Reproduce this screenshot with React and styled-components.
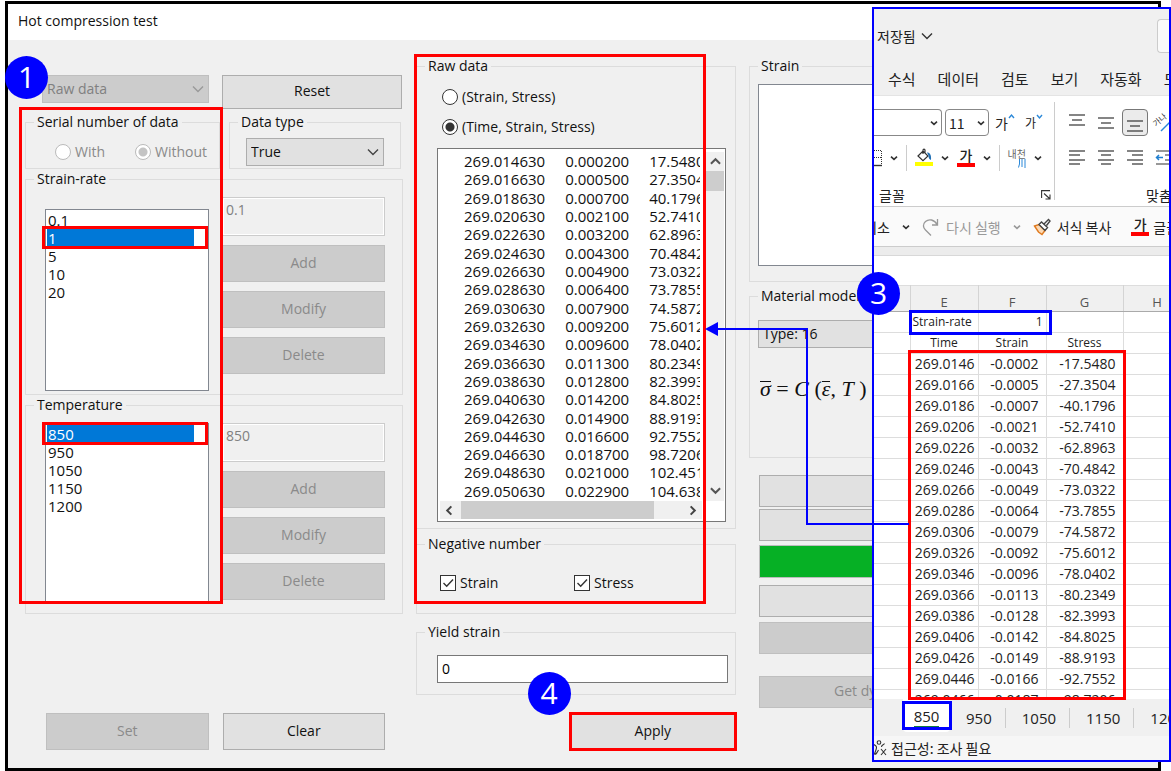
import React from 'react'
import styled, { createGlobalStyle, css } from 'styled-components'

const sans = '"Open Sans", "Noto Sans CJK KR", sans-serif'
const korean = '"Noto Sans CJK KR", sans-serif'

const strainRates = ['0.1', '1', '5', '10', '20']
const temperatures = ['850', '950', '1050', '1150', '1200']

const rawRows = [
  ['269.014630', '0.000200', '17.5480'],
  ['269.016630', '0.000500', '27.3504'],
  ['269.018630', '0.000700', '40.1796'],
  ['269.020630', '0.002100', '52.7410'],
  ['269.022630', '0.003200', '62.8963'],
  ['269.024630', '0.004300', '70.4842'],
  ['269.026630', '0.004900', '73.0322'],
  ['269.028630', '0.006400', '73.7855'],
  ['269.030630', '0.007900', '74.5872'],
  ['269.032630', '0.009200', '75.6012'],
  ['269.034630', '0.009600', '78.0402'],
  ['269.036630', '0.011300', '80.2349'],
  ['269.038630', '0.012800', '82.3993'],
  ['269.040630', '0.014200', '84.8025'],
  ['269.042630', '0.014900', '88.9193'],
  ['269.044630', '0.016600', '92.7552'],
  ['269.046630', '0.018700', '98.7206'],
  ['269.048630', '0.021000', '102.451'],
  ['269.050630', '0.022900', '104.638']
]

const sheetRows = [
  ['269.0146', '-0.0002', '-17.5480'],
  ['269.0166', '-0.0005', '-27.3504'],
  ['269.0186', '-0.0007', '-40.1796'],
  ['269.0206', '-0.0021', '-52.7410'],
  ['269.0226', '-0.0032', '-62.8963'],
  ['269.0246', '-0.0043', '-70.4842'],
  ['269.0266', '-0.0049', '-73.0322'],
  ['269.0286', '-0.0064', '-73.7855'],
  ['269.0306', '-0.0079', '-74.5872'],
  ['269.0326', '-0.0092', '-75.6012'],
  ['269.0346', '-0.0096', '-78.0402'],
  ['269.0366', '-0.0113', '-80.2349'],
  ['269.0386', '-0.0128', '-82.3993'],
  ['269.0406', '-0.0142', '-84.8025'],
  ['269.0426', '-0.0149', '-88.9193'],
  ['269.0446', '-0.0166', '-92.7552'],
  ['269.0466', '-0.0187', '-98.7206']
]

const Chevron = ({ size = 12, color = '#555', weight = 1.4, up = false }) => (
  <svg width={size} height={size} viewBox='0 0 12 12' fill='none'>
    <path d={up ? 'M1 8.5 6 3.5l5 5' : 'M1 3.5l5 5 5-5'} stroke={color} strokeWidth={weight} />
  </svg>
)

const SmallChevron = ({ color = '#333' }) => (
  <svg width='8' height='8' viewBox='0 0 8 8' fill='none'>
    <path d='M1 2.6 4 5.4 7 2.6' stroke={color} strokeWidth='1.6' />
  </svg>
)

const Lines = ({ rows }) => (
  <svg width='16' height='18' viewBox='0 0 16 18' stroke='#333' strokeWidth='1.2'>
    {rows.map(([x1, x2, y]) => (
      <path key={y} d={`M${x1} ${y}H${x2}`} />
    ))}
  </svg>
)

const DropDown = ({ label, value, disabled }) => (
  <DropDownBox $disabled={disabled}>
    <DropDownSelect aria-label={label} defaultValue={value} disabled={disabled}>
      <option>{value}</option>
    </DropDownSelect>
    <Chevron color={disabled ? '#999' : '#444'} />
  </DropDownBox>
)

const Choice = ({ type, name, label, checked, disabled }) => (
  <ChoiceLabel $disabled={disabled}>
    <Tick>
      {type === 'radio' ? (
        <Radio type='radio' name={name} defaultChecked={checked} disabled={disabled} />
      ) : (
        <Checkbox type='checkbox' defaultChecked={checked} />
      )}
      {type === 'checkbox' && (
        <svg width='16' height='16' viewBox='0 0 16 16' fill='none'>
          <path d='M3.5 8l3.2 3.2L13 4.5' stroke='#333' strokeWidth='1.4' />
        </svg>
      )}
    </Tick>
    {label}
  </ChoiceLabel>
)

const ValueEditor = ({ title, values, selected, current, low }) => (
  <Group>
    <Legend>{title}</Legend>
    <EditorGrid $low={low}>
      <ListBox role='listbox' aria-label={title} $low={low}>
        {values.map(value => (
          <ListItem key={value} role='option' aria-selected={value === selected}>
            {value}
            {value === selected && <Marker $inset='-3px -14px -2px -5px' />}
          </ListItem>
        ))}
      </ListBox>
      <EditorButtons>
        <ReadOnlyInput aria-label={`${title} value`} defaultValue={current} disabled />
        <Button disabled>Add</Button>
        <Button disabled>Modify</Button>
        <Button disabled>Delete</Button>
      </EditorButtons>
    </EditorGrid>
  </Group>
)

const InputColumn = () => (
  <Column>
    <TopRow>
      <DropDown label='Source' value='Raw data' disabled />
      <Button $height={34}>Reset</Button>
    </TopRow>
    <TypeRow>
      <Group>
        <Legend>Serial number of data</Legend>
        <SerialChoices>
          <Choice type='radio' name='serial' label='With' disabled />
          <Choice type='radio' name='serial' label='Without' checked disabled />
        </SerialChoices>
      </Group>
      <Group>
        <Legend>Data type</Legend>
        <DataType>
          <DropDown label='Data type' value='True' />
        </DataType>
      </Group>
    </TypeRow>
    <ValueEditor title='Strain-rate' values={strainRates} selected='1' current='0.1' low />
    <ValueEditor title='Temperature' values={temperatures} selected='850' current='850' />
    <SetRow>
      <Button disabled>Set</Button>
      <Button>Clear</Button>
    </SetRow>
    <InputMarker />
    <Badge $left={-20} $top={16}>1</Badge>
  </Column>
)

const RawDataColumn = () => (
  <Column>
    <Group $first>
      <Legend>Raw data</Legend>
      <FormatChoices>
        <Choice type='radio' name='format' label='(Strain, Stress)' />
        <Choice type='radio' name='format' label='(Time, Strain, Stress)' checked />
      </FormatChoices>
      <RawBox>
        <RawClip>
          <RawTable>
            <tbody>
              {rawRows.map(row => (
                <tr key={row[0]}>
                  {row.map(cell => (
                    <td key={cell}>{cell}</td>
                  ))}
                </tr>
              ))}
            </tbody>
          </RawTable>
        </RawClip>
        <VerticalScroll>
          <Chevron size={11} weight={2.2} up />
          <VerticalThumb />
          <Chevron size={11} weight={2.2} />
        </VerticalScroll>
        <HorizontalScroll>
          <svg width='11' height='11' viewBox='0 0 12 12' fill='none'>
            <path d='M8 1.5 3.5 6 8 10.5' stroke='#444' strokeWidth='2.2' />
          </svg>
          <HorizontalThumb />
          <svg width='11' height='11' viewBox='0 0 12 12' fill='none'>
            <path d='M4 1.5 8.5 6 4 10.5' stroke='#444' strokeWidth='2.2' />
          </svg>
        </HorizontalScroll>
      </RawBox>
    </Group>
    <Group $before={5}>
      <Legend>Negative number</Legend>
      <NegativeChoices>
        <Choice type='checkbox' label='Strain' checked />
        <Choice type='checkbox' label='Stress' checked />
      </NegativeChoices>
    </Group>
    <Group $before={8}>
      <Legend>Yield strain</Legend>
      <YieldField>
        <TextInput aria-label='Yield strain' defaultValue='0' />
      </YieldField>
    </Group>
    <ApplyRow>
      <ApplySlot>
        <Button>Apply</Button>
        <Marker $inset='-1px' />
        <Badge $left={-42} $top={-41}>4</Badge>
      </ApplySlot>
    </ApplyRow>
    <RawMarker />
  </Column>
)

const ModelColumn = () => (
  <Column>
    <Group $first>
      <Legend>Strain</Legend>
      <StrainPlot />
    </Group>
    <Group $before={4}>
      <Legend>Material model</Legend>
      <ModelFields>
        <DropDown label='Material model' value='Type: 16' />
        <Formula>
          <Bar>σ</Bar> = <i>C</i> (<Bar>ε</Bar>, <i>T</i> )
        </Formula>
      </ModelFields>
    </Group>
    <ModelActions>
      <Button $height={32} aria-label='Fit' />
      <Button $height={32} $before={2} aria-label='Draw' />
      <Progress role='progressbar' aria-label='Progress' aria-valuenow={100} />
      <Button $height={32} $before={7} aria-label='Show' />
      <Button $height={32} $before={5} disabled aria-label='Export' />
      <Button $height={32} $before={22} $lead disabled>Get dy</Button>
    </ModelActions>
  </Column>
)

const Ribbon = () => (
  <RibbonBar>
    <FontGroup>
      <RibbonRow $gap={3}>
        <RibbonCombo $open aria-label='글꼴 이름'><SmallChevron /></RibbonCombo>
        <RibbonCombo $narrow>11<SmallChevron /></RibbonCombo>
        <SizeButton>
          가
          <svg width='7' height='7' viewBox='0 0 7 7' fill='none'>
            <path d='M1 5l2.5-3L6 5' stroke='#2b88d8' strokeWidth='1.4' />
          </svg>
        </SizeButton>
        <SizeButton $small>
          가
          <svg width='7' height='7' viewBox='0 0 7 7' fill='none'>
            <path d='M1 2l2.5 3L6 2' stroke='#2b88d8' strokeWidth='1.4' />
          </svg>
        </SizeButton>
      </RibbonRow>
      <RibbonRow $gap={8}>
        <svg width='8' height='18' viewBox='0 0 8 18' fill='none' stroke='#333'>
          <path d='M0 1.5h7.5v14M0 8.5h7' strokeDasharray='1 1' />
          <path d='M0 16.5h8' strokeWidth='1.4' />
        </svg>
        <SmallChevron />
        <Divider />
        <svg width='18' height='20' viewBox='0 0 18 20' fill='none'>
          <path d='M3 8 8 3l5 5-5 4.600zM8 6V2.300c0-1.600 2-1.600 2 0V5' stroke='#333' strokeWidth='1.2' />
          <path d='M12 4.500c3 0 4.500 2.500 4 7.500-2-.5-2.600-3-2.500-4.500z' fill='#1f6fb5' />
          <path d='M0 14h18v4H0z' fill='#ff0' />
        </svg>
        <SmallChevron />
        <ColorLetter>가</ColorLetter>
        <SmallChevron />
        <Divider />
        <Phonetic>
          내천
          <svg width='8' height='9' viewBox='0 0 8 9' stroke='#2b88d8'>
            <path d='M1.5 0v5L.5 8.500M4 0v8M7 0v9' fill='none' />
          </svg>
        </Phonetic>
        <SmallChevron />
      </RibbonRow>
      <FontLabel>
        글꼴
        <svg width='10' height='10' viewBox='0 0 10 10' fill='none' stroke='#333' strokeWidth='1.1'>
          <path d='M.6 8V.6H9M3 3.500l5.500 5M9 4.500V9H4.500' />
        </svg>
      </FontLabel>
    </FontGroup>
    <GroupDivider />
    <AlignGroup>
      <RibbonRow $gap={3}>
        <IconSlot><Lines rows={[[0, 16, 1], [3, 13, 6], [0, 16, 11]]} /></IconSlot>
        <IconSlot><Lines rows={[[0, 16, 4], [3, 13, 9], [0, 16, 14]]} /></IconSlot>
        <IconSlot $active><Lines rows={[[0, 16, 7], [3, 13, 12], [0, 16, 17]]} /></IconSlot>
        <IconSlot>
          <svg width='18' height='20' viewBox='0 0 18 20' overflow='visible'>
            <text x='1' y='14' transform='rotate(-40 1 14)' fontFamily='Noto Sans CJK KR' fontSize='8' fill='#333'>가나</text>
            <path d='M6 18 17 7' stroke='#2b88d8' strokeWidth='1.5' />
          </svg>
        </IconSlot>
      </RibbonRow>
      <RibbonRow $gap={3}>
        <IconSlot><Lines rows={[[0, 16, 2], [0, 11, 6], [0, 16, 11], [0, 11, 15]]} /></IconSlot>
        <IconSlot><Lines rows={[[0, 16, 2], [3, 13, 6], [0, 16, 11], [3, 13, 15]]} /></IconSlot>
        <IconSlot><Lines rows={[[0, 16, 2], [5, 16, 6], [0, 16, 11], [5, 16, 15]]} /></IconSlot>
        <IconSlot>
          <svg width='18' height='18' viewBox='0 0 18 18' fill='none'>
            <path d='M1 2h17M10 6h8M10 11h8M1 15h17' stroke='#333' strokeWidth='1.2' />
            <path d='M8 8.500H1.500M4 6 1.500 8.500 4 11' stroke='#1f7fd0' strokeWidth='1.5' />
          </svg>
        </IconSlot>
      </RibbonRow>
      <AlignLabel>맞춤</AlignLabel>
    </AlignGroup>
  </RibbonBar>
)

const Spreadsheet = () => (
  <SheetFrame>
    <SheetWindow>
      <SheetTitle>
        저장됨
        <Chevron color='#333' />
        <SearchBox aria-label='검색' />
      </SheetTitle>
      <MenuTabs>
        {['수식', '데이터', '검토', '보기', '자동화', '도'].map(tab => (
          <span key={tab}>{tab}</span>
        ))}
      </MenuTabs>
      <Ribbon />
      <QuickBar>
        <Undo>취소</Undo>
        <SmallChevron />
        <svg width='18' height='20' viewBox='0 0 18 20' fill='none' stroke='#999' strokeWidth='1.3'>
          <path d='M15.500 2v6H10M15 7.500C12.500 2.500 7 1.500 3.500 4.500c-3 2.800-2.500 6 0 8.500l5.500 5.500' />
        </svg>
        <Muted>다시 실행</Muted>
        <SmallChevron color='#999' />
        <svg width='18' height='18' viewBox='0 0 18 18' fill='none' strokeWidth='1.4'>
          <path d='M1.500 8 6 6.500l6 6L9 16.500 5.500 14z' fill='#fbd9b5' stroke='#e07a1f' />
          <path d='M6 6.500 8.500 4l6 5.500-2.500 3zM11 6l4.500-4.500 1.500 1.500-3.500 4.500' fill='#fff' stroke='#444' />
        </svg>
        <span>서식 복사</span>
        <QuickColor>
          <ColorLetter>가</ColorLetter>
          글꼴
        </QuickColor>
      </QuickBar>
      <Strip />
      <FormulaBar />
      <SheetArea>
        <SheetTable>
          <colgroup>
            <SheetCol $width={36} />
            <SheetCol $width={68} />
            <SheetCol $width={68} />
            <SheetCol $width={77} />
            <SheetCol $width={68} />
          </colgroup>
          <thead>
            <tr>
              <th />
              <th>E</th>
              <th>F</th>
              <th>G</th>
              <th>H</th>
            </tr>
          </thead>
          <tbody>
            <tr>
              <td />
              <LabelCell $start>Strain-rate</LabelCell>
              <RateCell>1</RateCell>
              <td />
              <td />
            </tr>
            <tr>
              <td />
              <LabelCell>Time</LabelCell>
              <LabelCell>Strain</LabelCell>
              <LabelCell>Stress</LabelCell>
              <td />
            </tr>
            {sheetRows.map(([time, strain, stress]) => (
              <tr key={time}>
                <td />
                <td>{time}</td>
                <td>{strain}</td>
                <td>{stress}</td>
                <td />
              </tr>
            ))}
          </tbody>
        </SheetTable>
      </SheetArea>
      <SheetTabs>
        <ActiveTab>
          <span>850</span>
          <Marker $blue $inset='2px -2px 2px -1px' />
        </ActiveTab>
        {['950', '1050', '1150', '1200'].map(tab => (
          <SheetTab key={tab}>{tab}</SheetTab>
        ))}
      </SheetTabs>
      <StatusBar>
        <svg width='13' height='16' viewBox='0 0 13 16' fill='none' stroke='#333' strokeWidth='1.1'>
          <circle cx='5' cy='2.500' r='1.800' />
          <path d='M0 4.500c1.500 1.500 2.500 1 2.500 3S1 12 .5 14c1.500.8 2-.5 4-4M10.500 3.500c-1.500 2-3 1.500-3 3.500M7 9l5 6M12 9l-5 6' />
        </svg>
        접근성: 조사 필요
      </StatusBar>
    </SheetWindow>
    <RateMarker $blue />
    <SeriesMarker />
    <Badge $left={-15} $top={265}>3</Badge>
  </SheetFrame>
)

const App = () => (
  <>
    <GlobalStyle />
    <Page>
      <Dialog>
        <TitleBar>Hot compression test</TitleBar>
        <DialogBody>
          <InputColumn />
          <RawDataColumn />
          <ModelColumn />
        </DialogBody>
      </Dialog>
      <Spreadsheet />
      <Connector width='206' height='206' viewBox='0 0 206 206'>
        <path d='M204 202H102V7H10' fill='none' stroke='#00f' strokeWidth='2' />
        <path d='M0 7 13 0v14z' fill='#00f' />
      </Connector>
    </Page>
  </>
)

export default App

const GlobalStyle = createGlobalStyle`
  * {
    box-sizing: border-box;
  }
  body {
    margin: 0;
    background: #fff;
    color: #111;
    font-family: ${sans};
    font-size: 14px;
    line-height: 20px;
  }
  button, input, select {
    font: inherit;
  }
  svg {
    display: block;
    flex: none;
  }
`

const Page = styled.main`
  position: relative;
  display: flex;
  min-height: 100vh;
  padding: 1px 10px 0 5px;
  overflow: hidden;
`

const Dialog = styled.section`
  flex: 1;
  display: flex;
  flex-direction: column;
  border: 3px solid #000;
  background: #f0f0f0;
`

const TitleBar = styled.header`
  height: 36px;
  padding: 7px 10px;
  background: #fff;
`

const DialogBody = styled.div`
  flex: 1;
  display: grid;
  grid-template-columns: 378fr 320fr 393fr;
  gap: 13px;
  padding: 0 16px 18px 17px;
`

const Column = styled.div`
  position: relative;
  display: flex;
  flex-direction: column;
  min-width: 0;
`

const Group = styled.fieldset`
  min-width: 0;
  margin: ${({ $first, $before = 0 }) => ($first ? 16 : $before)}px 0 0;
  padding: 0;
  border: 1px solid #dcdcdc;
`

const Legend = styled.legend`
  height: 20px;
  margin-left: 8px;
  padding: 0 3px;
`

const Button = styled.button`
  width: 100%;
  height: ${({ $height = 37 }) => $height}px;
  margin: ${({ $before = 0 }) => $before}px 0 0;
  padding: 0 ${({ $lead }) => ($lead ? 74 : 4)}px 2px;
  border: 1px solid #adadad;
  background: #e1e1e1;
  color: #111;
  text-align: ${({ $lead }) => ($lead ? 'left' : 'center')};
  &:disabled {
    border-color: #bfbfbf;
    background: #ccc;
    color: #8a8a8a;
  }
`

const DropDownBox = styled.div`
  display: grid;
  align-items: center;
  height: 28px;
  border: 1px solid ${({ $disabled }) => ($disabled ? '#bfbfbf' : '#adadad')};
  background: ${({ $disabled }) => ($disabled ? '#ccc' : '#e1e1e1')};
  > * {
    grid-area: 1 / 1;
  }
  > svg {
    justify-self: end;
    margin-right: 4px;
    pointer-events: none;
  }
`

const DropDownSelect = styled.select`
  width: 100%;
  height: 26px;
  padding: 0 4px;
  border: 0;
  appearance: none;
  background: none;
  color: #111;
  opacity: 1;
  &:disabled {
    color: #808080;
  }
`

const ChoiceLabel = styled.label`
  display: flex;
  align-items: center;
  gap: 4px;
  height: 20px;
  color: ${({ $disabled }) => ($disabled ? '#8a8a8a' : '#111')};
`

const Tick = styled.span`
  display: grid;
  > * {
    grid-area: 1 / 1;
  }
  > svg {
    pointer-events: none;
  }
`

const Radio = styled.input`
  appearance: none;
  width: 16px;
  height: 16px;
  margin: 0;
  border: 1px solid #333;
  border-radius: 50%;
  background: #fff;
  &:checked {
    background: radial-gradient(circle, #333 4px, #fff 5px);
  }
  &:disabled {
    border-color: #bbb;
  }
  &:disabled:checked {
    background: radial-gradient(circle, #c4c4c4 4px, #fff 5px);
  }
`

const Checkbox = styled.input`
  appearance: none;
  width: 16px;
  height: 16px;
  margin: 0;
  border: 1px solid #333;
  background: #fff;
`

const Marker = styled.span`
  position: absolute;
  inset: ${({ $inset }) => $inset};
  border: 3px solid ${({ $blue }) => ($blue ? '#00f' : '#f00')};
  pointer-events: none;
`

const InputMarker = styled(Marker)`
  inset: 67px auto auto -6px;
  width: 54%;
  height: 497px;
`

const RawMarker = styled(Marker)`
  inset: 14px 30px auto -2px;
  height: 550px;
`

const Badge = styled.span`
  position: absolute;
  left: ${({ $left }) => $left}px;
  top: ${({ $top }) => $top}px;
  width: 43px;
  height: 43px;
  border-radius: 50%;
  background: #00f;
  color: #fff;
  font-family: ${sans};
  font-size: 30px;
  line-height: 42px;
  text-align: center;
`

const TopRow = styled.div`
  display: grid;
  grid-template-columns: 167fr 180fr;
  gap: 13px;
  padding: 35px 1px 0 17px;
`

const TypeRow = styled.div`
  display: grid;
  grid-template-columns: 195fr 172fr;
  gap: 9px;
  margin-top: 3px;
  padding-right: 2px;
`

const SerialChoices = styled.div`
  display: flex;
  gap: 30px;
  padding: 10px 0 6px 29px;
`

const DataType = styled.div`
  padding: 6px 16px 2px;
`

const EditorGrid = styled.div`
  display: grid;
  grid-template-columns: 164fr 163fr;
  gap: 13px;
  padding: 0 17px ${({ $low }) => ($low ? 3 : 11)}px 19px;
`

const ListBox = styled.ul`
  height: ${({ $low }) => ($low ? 182 : 179)}px;
  margin: ${({ $low }) => ($low ? 20 : 8)}px 0 0;
  padding: 1px;
  border: 1px solid #828790;
  background: #fff;
  list-style: none;
`

const ListItem = styled.li`
  position: relative;
  margin-right: 13px;
  padding-left: 1px;
  font-size: 15px;
  line-height: 18px;
  &[aria-selected='true'] {
    background: #0078d7;
    color: #fff;
  }
`

const EditorButtons = styled.div`
  display: flex;
  flex-direction: column;
  gap: 9px;
  padding-top: 8px;
`

const ReadOnlyInput = styled.input`
  width: 100%;
  height: 39px;
  padding: 0 3px 14px;
  border: 1px solid #ccc;
  background: #f0f0f0;
  box-shadow: inset 0 0 0 1px #fff;
  color: #808080;
`

const SetRow = styled.div`
  display: grid;
  grid-template-columns: 1fr 1fr;
  gap: 14px;
  margin-top: auto;
  padding: 0 18px 0 21px;
`

const FormatChoices = styled.div`
  display: flex;
  flex-direction: column;
  gap: 10px;
  padding: 11px 25px;
`

const RawBox = styled.div`
  display: grid;
  grid-template-columns: minmax(0, 1fr) 18px;
  column-gap: 4px;
  margin: 0 9px 6px 20px;
  padding: 3px 1px 2px 2px;
  border: 1px solid #777;
  background: #fff;
`

const RawClip = styled.div`
  margin-right: 2px;
  overflow: hidden;
`

const RawTable = styled.table`
  height: 348px;
  margin-bottom: 1px;
  margin-left: 24px;
  border-collapse: collapse;
  font-size: 15px;
  line-height: 18px;
  td {
    padding: 0 20px 0 0;
  }
  td:last-child {
    padding-right: 0;
  }
`

const VerticalScroll = styled.div`
  display: flex;
  flex-direction: column;
  align-items: center;
  gap: 4px;
  padding: 4px 0 5px;
  background: #f0f0f0;
  > svg:last-child {
    margin-top: auto;
  }
`

const VerticalThumb = styled.div`
  width: 100%;
  height: 20px;
  background: #cdcdcd;
`

const HorizontalScroll = styled.div`
  display: flex;
  align-items: center;
  gap: 6px;
  height: 18px;
  padding: 0 4px;
  background: #f0f0f0;
  > svg:last-child {
    margin-left: auto;
  }
`

const HorizontalThumb = styled.div`
  width: 76%;
  height: 18px;
  background: #cdcdcd;
`

const NegativeChoices = styled.div`
  display: grid;
  grid-template-columns: 1fr 1fr;
  padding: 19px 27px 20px 23px;
`

const YieldField = styled.div`
  padding: 13px 7px 11px 20px;
`

const TextInput = styled.input`
  display: block;
  width: 100%;
  height: 28px;
  padding: 0 4px 2px;
  border: 1px solid #777;
  background: #fff;
`

const ApplyRow = styled.div`
  display: flex;
  justify-content: flex-end;
  margin-top: auto;
`

const ApplySlot = styled.div`
  position: relative;
  width: 52%;
`

const StrainPlot = styled.div`
  height: 182px;
  margin: 8px 8px 15px;
  border: 1px solid #828790;
  background: #fff;
`

const ModelFields = styled.div`
  height: 151px;
  padding: 14px 8px;
`

const Formula = styled.div`
  margin-top: 28px;
  padding-left: 2px;
  font-family: 'Liberation Serif', serif;
  font-size: 22px;
  line-height: 26px;
  white-space: nowrap;
`

const Bar = styled.i`
  display: inline-block;
  border-top: 1px solid #111;
  line-height: 14px;
`

const ModelActions = styled.div`
  display: flex;
  flex-direction: column;
  padding: 17px 8px 0 10px;
`

const Progress = styled.div`
  height: 33px;
  margin-top: 4px;
  border: 1px solid #bcbcbc;
  background: #06b025;
`

const SheetFrame = styled.section`
  position: absolute;
  top: 7px;
  right: 0;
  width: 299px;
  height: 755px;
  font-family: ${korean};
  color: #222;
`

const SheetWindow = styled.div`
  display: flex;
  flex-direction: column;
  height: 100%;
  overflow: hidden;
  border: 2px solid #00f;
  background: #fff;
  white-space: nowrap;
`

const SheetTitle = styled.div`
  display: flex;
  flex: none;
  align-items: center;
  gap: 5px;
  height: 54px;
  padding-left: 3px;
  background: #f0f0f0;
`

const SearchBox = styled.input`
  width: 12px;
  height: 34px;
  margin-left: auto;
  padding: 0;
  border: 1px solid #ccc;
  border-right: 0;
  border-radius: 4px 0 0 4px;
  background: #fafafa;
`

const MenuTabs = styled.nav`
  display: flex;
  flex: none;
  gap: 22px;
  height: 33px;
  padding: 6px 0 0 14px;
  border-bottom: 1px solid #e4e4e4;
  background: #f0f0f0;
  font-size: 15px;
`

const RibbonBar = styled.div`
  display: flex;
  flex: none;
  height: 111px;
  border-bottom: 1px solid #ccc;
`

const FontGroup = styled.div`
  display: flex;
  flex-direction: column;
  flex: none;
  gap: 8px;
  width: 180px;
  padding-top: 13px;
`

const AlignGroup = styled.div`
  display: flex;
  flex-direction: column;
  gap: 8px;
  padding: 13px 0 0 9px;
`

const GroupDivider = styled.div`
  flex: none;
  width: 1px;
  height: 98px;
  margin-top: 6px;
  background: #ccc;
`

const RibbonRow = styled.div`
  display: flex;
  flex: none;
  align-items: center;
  gap: ${({ $gap }) => $gap}px;
  height: 27px;
`

const RibbonCombo = styled.button`
  display: flex;
  align-items: center;
  justify-content: space-between;
  width: ${({ $narrow }) => ($narrow ? 44 : 68)}px;
  height: 27px;
  padding: 0 3px;
  border: 1px solid #888;
  border-radius: 4px;
  background: #fff;
  color: #222;
  ${({ $open }) => $open && css`
    justify-content: flex-end;
    border-left: 0;
    border-radius: 0 4px 4px 0;
  `}
`

const SizeButton = styled.span`
  display: flex;
  align-items: flex-start;
  width: 27px;
  padding-left: 3px;
  font-size: ${({ $small }) => ($small ? 12 : 14)}px;
`

const Divider = styled.span`
  width: 1px;
  height: 26px;
  background: #ccc;
`

const ColorLetter = styled.span`
  flex: none;
  width: 18px;
  border-bottom: 4px solid #f00;
  font-weight: 500;
  font-size: 14px;
  line-height: 15px;
  text-align: center;
`

const Phonetic = styled.span`
  display: flex;
  flex-direction: column;
  align-items: flex-end;
  width: 18px;
  color: #666;
  font-size: 10px;
  line-height: 11px;
`

const FontLabel = styled.div`
  display: flex;
  align-items: center;
  justify-content: space-between;
  padding: 6px 3px 0 5px;
`

const AlignLabel = styled.div`
  padding: 6px 0 0 82px;
`

const IconSlot = styled.span`
  display: flex;
  flex: none;
  align-items: center;
  justify-content: center;
  width: 26px;
  height: 27px;
  ${({ $active }) => $active && css`
    border: 1px solid #777;
    border-radius: 4px;
    background: #ebebeb;
  `}
`

const QuickBar = styled.div`
  display: flex;
  flex: none;
  align-items: center;
  gap: 12px;
  height: 40px;
  border-bottom: 1px solid #ccc;
  background: #fafafa;
  > * {
    flex: none;
  }
  > span {
    margin-left: -6px;
  }
`

const Undo = styled.div`
  display: flex;
  justify-content: flex-end;
  width: 16px;
  overflow: hidden;
`

const Muted = styled.span`
  color: #999;
`

const QuickColor = styled.div`
  display: flex;
  align-items: center;
  gap: 4px;
  margin-left: 8px;
`

const Strip = styled.div`
  flex: none;
  height: 9px;
  border-bottom: 1px solid #d8d8d8;
  background: #ececec;
`

const FormulaBar = styled.div`
  flex: none;
  height: 29px;
`

const SheetArea = styled.div`
  flex: 1;
  min-height: 0;
  overflow: hidden;
`

const SheetTable = styled.table`
  width: 317px;
  table-layout: fixed;
  border-collapse: collapse;
  font-family: ${sans};
  line-height: 18px;
  th {
    height: 26px;
    padding: 6px 0 0;
    border-top: 1px solid #ddd;
    border-right: 1px solid #d4d4d4;
    border-bottom: 1px solid #aaa;
    background: #f0f0f0;
    color: #555;
    font-size: 13px;
    font-weight: 400;
  }
  td {
    height: 21px;
    padding: 0 3px 0 0;
    border-right: 1px solid #ddd;
    border-bottom: 1px solid #ddd;
    text-align: right;
  }
  td:nth-child(3), td:nth-child(4) {
    padding-right: 7px;
  }
`

const SheetCol = styled.col`
  width: ${({ $width }) => $width}px;
`

const LabelCell = styled.td`
  &&& {
    padding: 0 2px;
    font-size: 12px;
    text-align: ${({ $start }) => ($start ? 'left' : 'center')};
  }
`

const RateCell = styled.td`
  &&& {
    padding-right: 3px;
    font-size: 12px;
  }
`

const RateMarker = styled(Marker)`
  inset: 303px auto auto 37px;
  width: 143px;
  height: 25px;
`

const SeriesMarker = styled(Marker)`
  inset: 343px auto auto 36px;
  width: 218px;
  height: 350px;
`

const SheetTabs = styled.div`
  display: flex;
  flex: none;
  height: 37px;
  padding-left: 29px;
  background: #f0f0f0;
  font-family: ${sans};
  font-size: 15px;
`

const ActiveTab = styled.div`
  position: relative;
  flex: none;
  width: 47px;
  height: 33px;
  padding-top: 7px;
  border-radius: 0 0 4px 4px;
  background: #fff;
  text-align: center;
  > span:first-child {
    display: inline-block;
    border-bottom: 1px solid #107c41;
    line-height: 19px;
  }
`

const SheetTab = styled.div`
  flex: none;
  height: 20px;
  margin-top: 9px;
  padding: 0 13px 0 16px;
  border-right: 1px solid #ccc;
`

const StatusBar = styled.footer`
  display: flex;
  flex: none;
  align-items: center;
  gap: 4px;
  height: 24px;
  background: #f6f6f6;
`

const Connector = styled.svg`
  position: absolute;
  top: 322px;
  right: 260px;
`
